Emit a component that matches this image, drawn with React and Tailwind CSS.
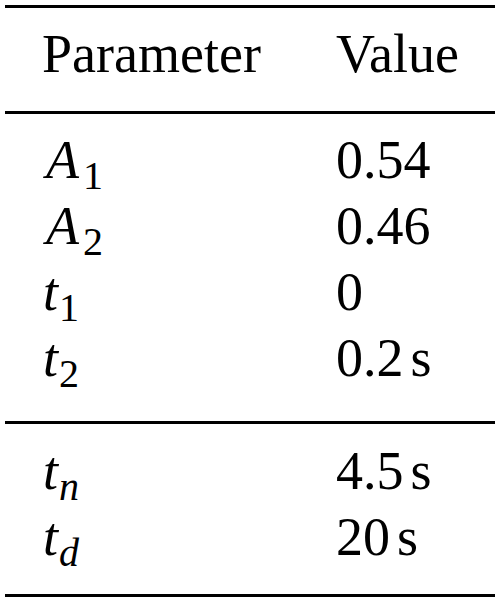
import React from "react";

const Sub = ({ base, sub, baseCls, subCls }) => (
  <span className="whitespace-nowrap">
    <span className={"italic text-[54px] font-['Liberation_Serif',serif] " + baseCls}>{base}</span>
    <span className={"text-[40px] align-[-11px] font-['Liberation_Serif',serif] " + subCls}>{sub}</span>
  </span>
);

const Unit = ({ v }) => (
  <span className="whitespace-nowrap">
    <span className="text-[54px] font-['Liberation_Serif',serif]">{v}</span>
    <span className="ml-[7px] text-[54px] font-['Liberation_Serif',serif]">s</span>
  </span>
);

const Row = ({ left, right }) => (
  <div className="grid grid-cols-[331px_1fr] h-[66px] leading-[66px]">
    <div className="pl-[37px] text-[54px] font-['Liberation_Serif',serif]">{left}</div>
    <div className="text-[54px] font-['Liberation_Serif',serif]">{right}</div>
  </div>
);

export default function App() {
  return (
    <div className="w-[500px] h-[602px] bg-white px-[5px] pt-[5px]">
      <div className="h-[2.5px] bg-black" />
      <div className="grid grid-cols-[331px_1fr] h-[103.5px] pt-[13px] leading-[66px]">
        <div className="pl-[37px] text-[54px] font-['Liberation_Serif',serif]">Parameter</div>
        <div className="text-[54px] font-['Liberation_Serif',serif]">Value</div>
      </div>
      <div className="h-[2.5px] bg-black" />
      <div className="pt-[13px] h-[307.5px]">
        <Row left={<Sub base="A" sub="1" baseCls="ml-[4px]" subCls="ml-[4px]" />} right="0.54" />
        <Row left={<Sub base="A" sub="2" baseCls="ml-[4px]" subCls="ml-[4px]" />} right="0.46" />
        <Row left={<Sub base="t" sub="1" baseCls="ml-[1px]" subCls="ml-[1px]" />} right="0" />
        <Row left={<Sub base="t" sub="2" baseCls="ml-[1px]" subCls="ml-[1px]" />} right={<Unit v="0.2" />} />
      </div>
      <div className="h-[2.5px] bg-black" />
      <div className="pt-[14px] h-[170.5px]">
        <Row left={<Sub base="t" sub="n" baseCls="ml-[1px]" subCls="italic ml-[1px]" />} right={<Unit v="4.5" />} />
        <Row left={<Sub base="t" sub="d" baseCls="ml-[1px]" subCls="italic ml-[1px]" />} right={<Unit v="20" />} />
      </div>
      <div className="h-[2.5px] bg-black" />
    </div>
  );
}
